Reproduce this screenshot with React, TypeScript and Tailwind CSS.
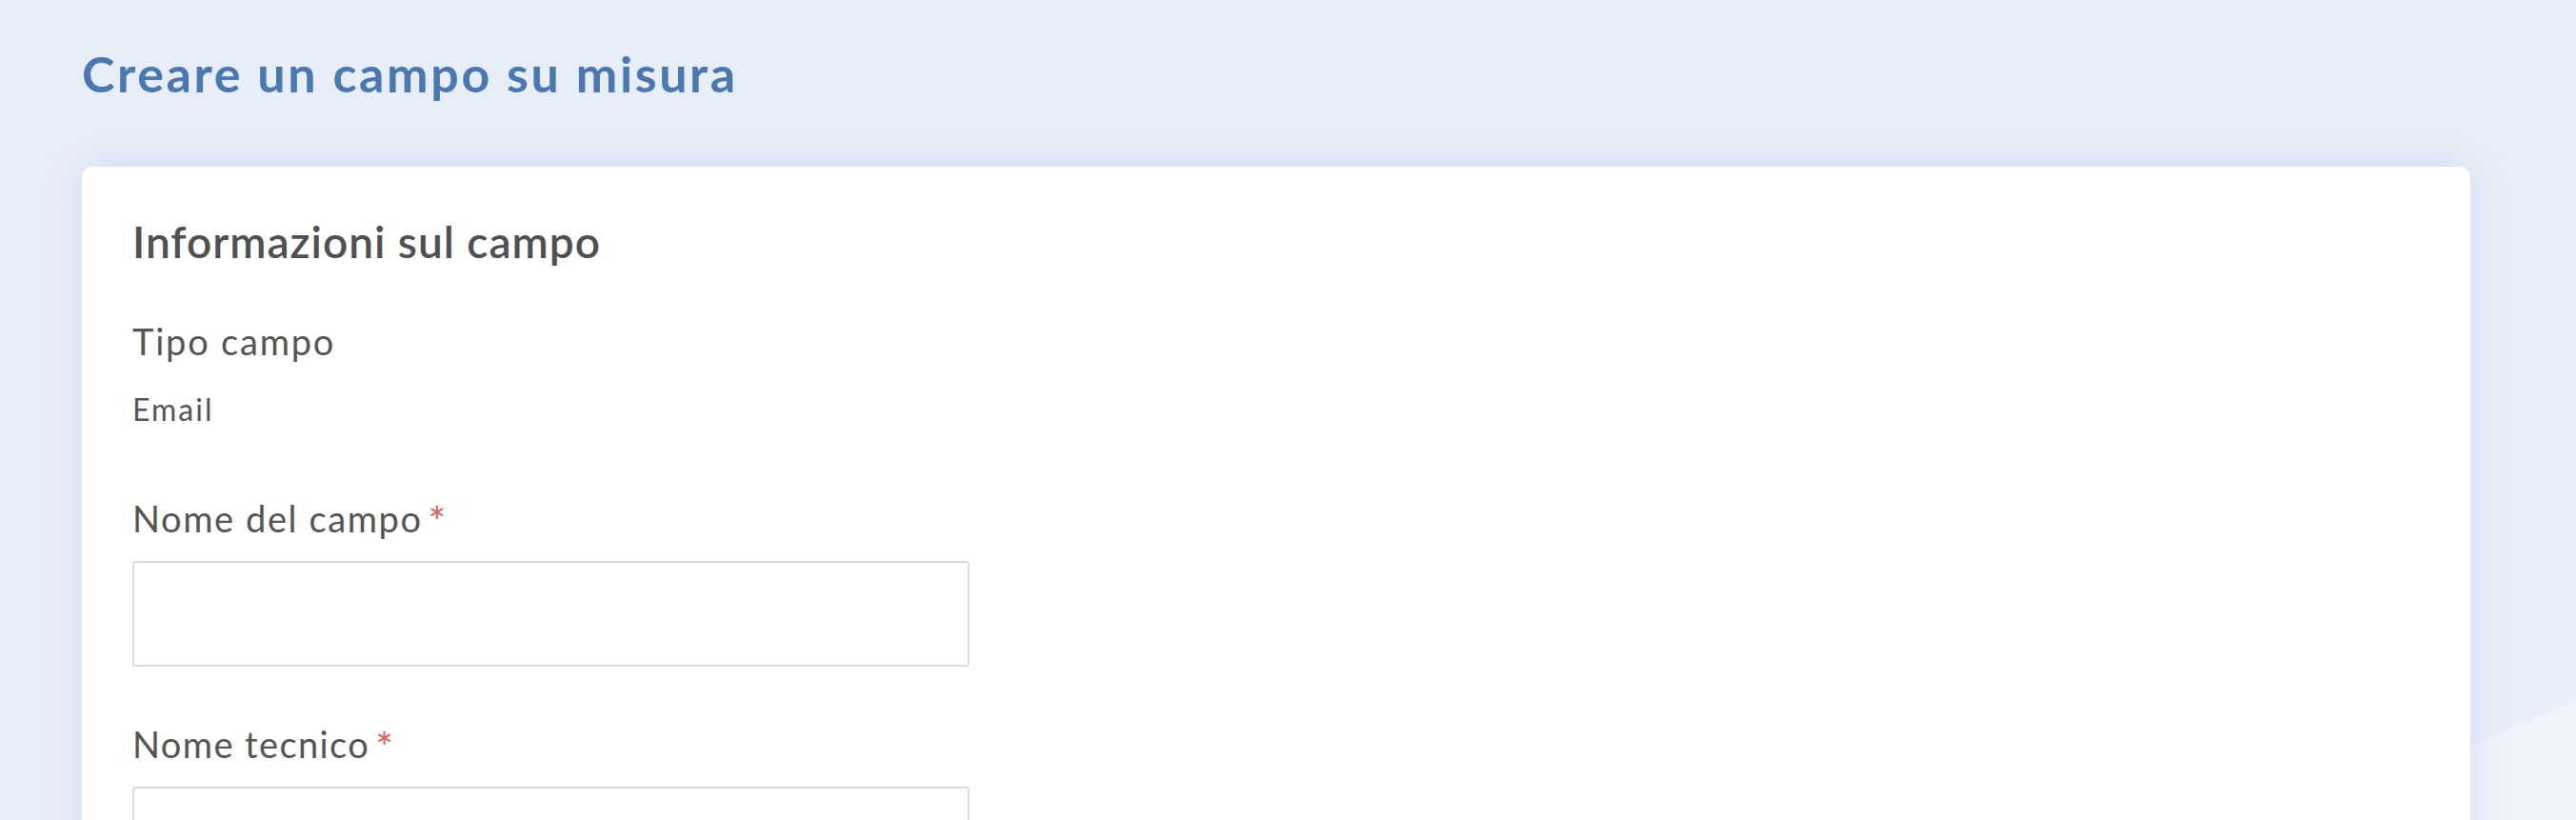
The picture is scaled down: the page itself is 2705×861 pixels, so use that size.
export default function App() {
  return (
    <main
      className="relative min-h-screen h-[861px] overflow-hidden bg-[#e8eef8] px-[86px] pt-[51px]"
      style={{ fontFamily: 'Lato, "Noto Sans", sans-serif' }}
    >
      {/* lighter diagonal band in the background */}
      <svg className="absolute inset-0 w-full h-full pointer-events-none" viewBox="0 0 2705 861" preserveAspectRatio="none">
        <polygon points="0,1880 2705,735 2705,861 0,861" fill="#eff3fc" />
      </svg>

      <h1 className="relative text-[52px] leading-none font-bold tracking-[2.6px] text-[#4a78b2]">Creare un campo su misura</h1>

      <section className="relative mt-[72px] mr-[25px] bg-white rounded-[10px] shadow-[0_0_36px_rgba(196,208,240,0.7)] pl-[53px] pt-[56px] pb-[80px]">
        <h2 className="text-[46px] leading-none font-semibold tracking-[1px] text-[#505050]">Informazioni sul campo</h2>

        <div className="mt-[62px] text-[38px] leading-none tracking-[1.8px] text-[#555555]">Tipo campo</div>
        <div className="mt-[37px] text-[32px] leading-none tracking-[2px] text-[#555555]">Email</div>

        <label className="flex items-start mt-[79px] h-[38px] text-[38px] leading-none tracking-[1.6px] text-[#555555]">
          Nome del campo<span className="ml-[6px] text-[44px] leading-none text-[#e0625b]">*</span>
        </label>
        <input type="text" className="block mt-[26px] w-[879px] h-[111px] border-2 border-[#d6dbe5] rounded-[3px] outline-none" />

        <label className="flex items-start mt-[62px] h-[38px] text-[38px] leading-none tracking-[1.4px] text-[#555555]">
          Nome tecnico<span className="ml-[6px] text-[44px] leading-none text-[#e0625b]">*</span>
        </label>
        <input type="text" className="block mt-[26px] w-[879px] h-[111px] border-2 border-[#d6dbe5] rounded-[3px] outline-none" />
      </section>
    </main>
  );
}
